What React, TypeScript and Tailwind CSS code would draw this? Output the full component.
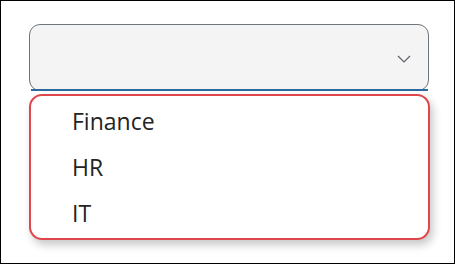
export default function App() {
  const options = ['Finance', 'HR', 'IT'];

  return (
    <div
      className="w-[455px] h-[264px] border border-black bg-white pt-[23px] pl-[28px]"
      style={{ fontFamily: '"Open Sans", "Noto Sans", sans-serif' }}
    >
      <div className="relative w-[400px] h-[67px] rounded-[11px] border border-[#6e757b] bg-[#f4f4f5]">
        <svg
          className="absolute right-[17px] top-[30px]"
          width="14"
          height="8"
          viewBox="0 0 14 8"
          fill="none"
          stroke="#5f6368"
          strokeWidth={1.2}
        >
          <path d="M1 1l6 6 6-6" />
        </svg>
        <div className="absolute -bottom-px left-px right-0 h-[2px] bg-[#2a6a9c]" />
      </div>
      <div className="mt-[3px] w-[401px] h-[146px] rounded-[13px] border-2 border-[#e0474c] bg-white shadow-[3px_5px_9px_rgba(0,0,0,0.22)] pt-[2px] pl-[41px]">
        {options.map((o) => (
          <div key={o} className="h-[46px] flex items-center text-[23px] text-[#242424]">
            {o}
          </div>
        ))}
      </div>
    </div>
  );
}
